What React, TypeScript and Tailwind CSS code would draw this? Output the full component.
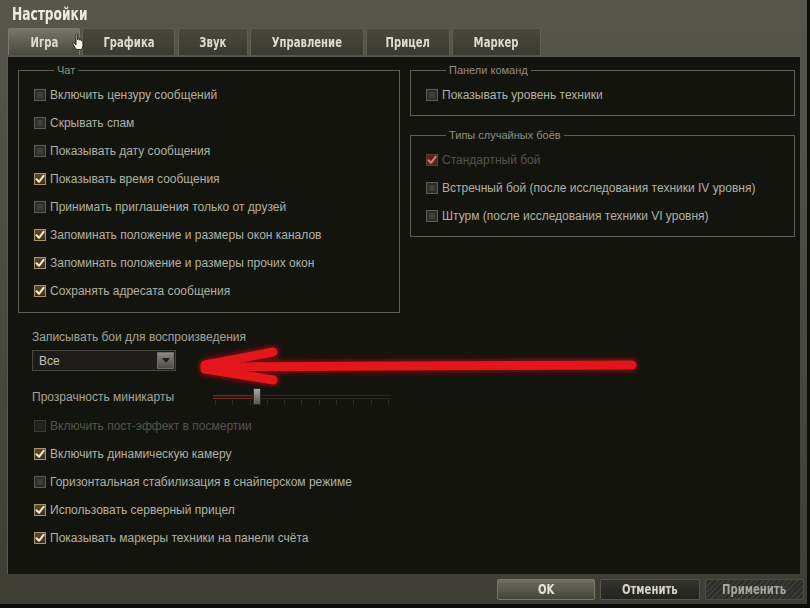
import React from 'react';

const bodyFont = { fontFamily: '"Liberation Sans", Arial, sans-serif' };
const headFont = {
  fontFamily: '"Liberation Sans Narrow", "DejaVu Sans Condensed", "Liberation Sans", sans-serif',
};

interface CheckProps {
  label: string;
  checked?: boolean;
  disabled?: boolean;
}

const Check: React.FC<CheckProps> = ({ label, checked = false, disabled = false }) => {
  const boxClass = checked
    ? disabled
      ? 'border-[#6a3426] bg-[#5a261a]'
      : 'border-[#a8966a] bg-gradient-to-b from-[#5c4a2a] to-[#3c2e18]'
    : disabled
      ? 'border-[#3a3a33] bg-[#1f1f1b]'
      : 'border-[#5c5c53] bg-[#2e2e28]';

  return (
    <div className="flex h-[28px] items-center gap-[4px]">
      <span className={`relative flex h-[12px] w-[12px] items-center justify-center border ${boxClass}`}>
        {checked ? (
          <svg width="10" height="10" viewBox="0 0 10 10">
            <path
              d="M1.5 5.2 L4 7.8 L8.6 1.8"
              fill="none"
              stroke={disabled ? '#b88a78' : '#f4ecd2'}
              strokeWidth="2"
              strokeLinecap="round"
              strokeLinejoin="round"
            />
          </svg>
        ) : (
          <span className={`h-[6px] w-[6px] ${disabled ? 'bg-[#26261f]' : 'bg-[#3e3e36]'}`} />
        )}
      </span>
      <span
        className={`text-[12px] leading-none ${disabled ? 'text-[#55554c]' : 'text-[#b1b1a3]'}`}
        style={bodyFont}
      >
        {label}
      </span>
    </div>
  );
};

const Group: React.FC<{ title: string; className?: string; children: React.ReactNode }> = ({
  title,
  className = '',
  children,
}) => (
  <fieldset className={`border border-[#5e5e56] pl-[15px] ${className}`}>
    <legend
      className="ml-[20px] px-[3px] text-[11px] leading-[12px] text-[#8f8f84]"
      style={bodyFont}
    >
      {title}
    </legend>
    {children}
  </fieldset>
);

const tabs = [
  { name: 'Игра', w: 'w-[72px]', active: true },
  { name: 'Графика', w: 'w-[93px] ml-[2px]' },
  { name: 'Звук', w: 'w-[70px] ml-[3px]' },
  { name: 'Управление', w: 'w-[114px] ml-[2px]' },
  { name: 'Прицел', w: 'w-[84px] ml-[2px]' },
  { name: 'Маркер', w: 'w-[89px] ml-[2px]' },
];

const HandCursor = () => (
  <svg width="14" height="18" viewBox="0 0 14 18">
    <path
      d="M4 1.5 C4 0.6 5.6 0.6 5.6 1.5 L5.6 7 L6 5.8 C6 5 7.5 5 7.5 5.8 L7.6 7.2 C7.7 6.4 9.2 6.4 9.2 7.3 L9.3 8 C9.4 7.3 10.9 7.3 10.9 8.2 L10.9 12.5 C10.9 14.5 9.8 16.5 8.5 16.5 L5.2 16.5 C4.2 16.5 3.6 15.5 2.8 14.3 L1 11.2 C0.5 10.3 1.8 9.6 2.5 10.4 L4 12 Z"
      fill="#f4f2ea"
      stroke="#1a1a16"
      strokeWidth="0.9"
    />
  </svg>
);

const Arrow = () => (
  <svg width="445" height="44" viewBox="0 0 445 44" className="absolute left-[195px] top-[344px]">
    <defs>
      <filter id="glow" x="-10%" y="-50%" width="120%" height="200%">
        <feGaussianBlur stdDeviation="2.5" />
      </filter>
    </defs>
    <g stroke="#7a0d0d" strokeWidth="14" strokeLinecap="round" fill="none" filter="url(#glow)" opacity="0.8">
      <path d="M437 21 L10 23" />
      <path d="M78 8 L10 21" />
      <path d="M10 25 L78 36" />
    </g>
    <g stroke="#e3161b" strokeWidth="9" strokeLinecap="round" fill="none">
      <path d="M437 21 C300 22 150 22 10 23" />
      <path d="M78 8 L10 21" />
      <path d="M10 25 L78 36" />
    </g>
  </svg>
);

const Slider = () => (
  <div className="relative h-[18px] w-[178px]">
    <div className="absolute left-0 right-0 top-[7px] h-[4px] border-y border-[#2c2a25] bg-[#100f0c]" />
    <div className="absolute left-0 top-[7px] h-[4px] w-[41px] border-y border-[#6e2a22] bg-[#2a1410]" />
    <div className="absolute left-0 right-0 top-[12px] flex justify-between px-[2px]">
      {Array.from({ length: 11 }).map((_, i) => (
        <span key={i} className="h-[5px] w-px bg-[#2e2c26]" />
      ))}
    </div>
    <div className="absolute left-[40px] top-0 h-[17px] w-[8px] border border-[#2a2a24] bg-gradient-to-b from-[#a8a89c] to-[#5a5a50]" />
  </div>
);

const Head: React.FC<{ children: React.ReactNode; className?: string }> = ({ children, className = '' }) => (
  <span className={`inline-block scale-x-[0.8] whitespace-nowrap font-bold leading-none ${className}`} style={headFont}>
    {children}
  </span>
);

export default function App() {
  return (
    <div className="relative h-[608px] w-[810px] overflow-hidden bg-[#0c0c0a]" style={bodyFont}>
      <div className="flex h-[604px] w-[807px] flex-col bg-gradient-to-b from-[#56564a] via-[#4a4a3f] to-[#3e3e34]">
        {/* Title */}
        <div className="flex h-[28px] items-center pl-[12px]">
          <Head className="origin-left text-[17px] text-[#ecece4]">Настройки</Head>
        </div>

        {/* Tabs */}
        <div className="flex h-[27px] pl-[8px]">
          {tabs.map((t) => (
            <div
              key={t.name}
              className={`flex h-[27px] items-center justify-center rounded-t-[2px] border border-b-0 ${t.w} ${
                t.active
                  ? 'border-[#7a7a68] bg-gradient-to-b from-[#76766a] to-[#48483c]'
                  : 'border-[#5e5e52] bg-gradient-to-b from-[#48483e] to-[#3a3a31]'
              }`}
            >
              <Head className="text-[14px] text-[#dcdcd2]">{t.name}</Head>
            </div>
          ))}
        </div>

        {/* Content */}
        <div className="mx-[7px] mt-px h-[518px] border-l border-t border-[#5a5a4e] bg-[#14140f] pl-[10px] pt-[7px]">
          <div className="flex gap-[10px]">
            <Group title="Чат" className="w-[382px] pb-[7px]">
              <div className="pt-[5px]">
                <Check label="Включить цензуру сообщений" />
                <Check label="Скрывать спам" />
                <Check label="Показывать дату сообщения" />
                <Check label="Показывать время сообщения" checked />
                <Check label="Принимать приглашения только от друзей" />
                <Check label="Запоминать положение и размеры окон каналов" checked />
                <Check label="Запоминать положение и размеры прочих окон" checked />
                <Check label="Сохранять адресата сообщения" checked />
              </div>
            </Group>
            <div className="flex w-[385px] flex-col">
              <Group title="Панели команд" className="pb-[6px]">
                <div className="pt-[5px]">
                  <Check label="Показывать уровень техники" />
                </div>
              </Group>
              <Group title="Типы случайных боёв" className="mt-[13px] pb-[6px]">
                <div className="pt-[5px]">
                  <Check label="Стандартный бой" checked disabled />
                  <Check label="Встречный бой (после исследования техники IV уровня)" />
                  <Check label="Штурм (после исследования техники VI уровня)" />
                </div>
              </Group>
            </div>
          </div>

          <div className="ml-[14px] mt-[16px] flex flex-col">
            <span className="text-[12px] leading-[16px] text-[#a4a498]">Записывать бои для воспроизведения</span>
            <div className="mt-[5px] flex h-[21px] w-[144px] items-center justify-between border border-[#4a4a40] bg-[#1d1c18] pl-[6px] pr-px">
              <span className="text-[12px] leading-none text-[#c4c4b6]">Все</span>
              <span className="flex h-[17px] w-[17px] items-center justify-center border border-[#6e6e64] bg-gradient-to-b from-[#8a8a80] to-[#4c4c44]">
                <svg width="8" height="5" viewBox="0 0 8 5">
                  <path d="M0 0 L8 0 L4 5 Z" fill="#1c1c18" />
                </svg>
              </span>
            </div>
            <div className="mt-[16px] flex h-[20px] items-center">
              <span className="w-[181px] text-[12px] leading-none text-[#a4a498]">Прозрачность миникарты</span>
              <Slider />
            </div>
          </div>

          <div className="ml-[16px] mt-[5px]">
            <Check label="Включить пост-эффект в посмертии" disabled />
            <Check label="Включить динамическую камеру" checked />
            <Check label="Горизонтальная стабилизация в снайперском режиме" />
            <Check label="Использовать серверный прицел" checked />
            <Check label="Показывать маркеры техники на панели счёта" checked />
          </div>
        </div>

        {/* Buttons */}
        <div className="flex h-[30px] items-center justify-end gap-[5px] pr-[3px]">
          <button className="flex h-[21px] w-[98px] items-center justify-center rounded-[2px] border border-[#7a7a6a] bg-gradient-to-b from-[#6e6e5e] to-[#44443a]">
            <Head className="text-[14px] text-[#e4e4da]">OK</Head>
          </button>
          <button className="flex h-[21px] w-[100px] items-center justify-center rounded-[2px] border border-[#55554a] bg-gradient-to-b from-[#35352d] to-[#222220]">
            <Head className="text-[14px] text-[#d4d4ca]">Отменить</Head>
          </button>
          <button className="flex h-[21px] w-[99px] items-center justify-center rounded-[2px] border border-[#4c4c44] bg-[repeating-linear-gradient(135deg,#3a3a36_0px,#3a3a36_2px,#2c2c28_2px,#2c2c28_4px)]">
            <Head className="text-[14px] text-[#a6a6a0]">Применить</Head>
          </button>
        </div>
      </div>

      <div className="absolute left-[72px] top-[33px]">
        <HandCursor />
      </div>
      <Arrow />
    </div>
  );
}
